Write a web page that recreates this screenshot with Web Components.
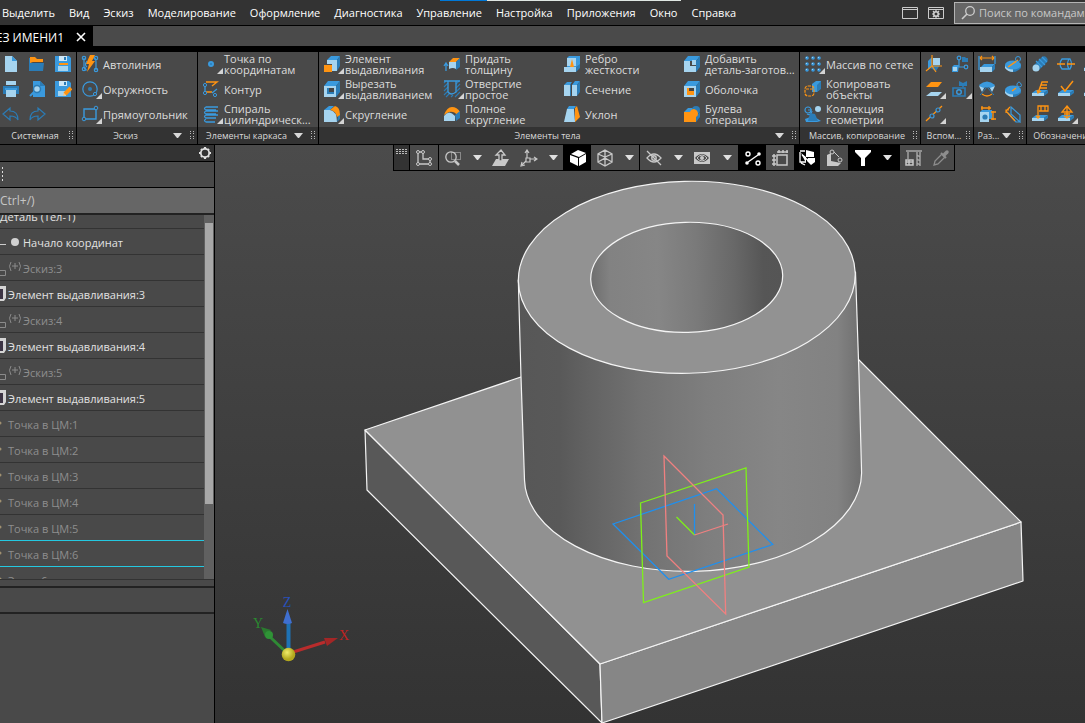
<!DOCTYPE html>
<html lang="ru">
<head>
<meta charset="utf-8">
<title>Деталь</title>
<style>
html, body { margin: 0; height: 100%; }
body { background: #333; overflow: hidden; }
</style>
</head>
<body>
<k-app></k-app>
<script>
const B = '#3a9ade', D = '#2b7cb6', L = '#a6d4ef', O = '#ff9412', G = '#c8c8c8';
const cubeBack = `<path fill="${B}" d="M1 6 5 1h12l-4 5z"/><path fill="${D}" d="M13 6l4-5v11l-4 5z"/>`;
const plate = `<path fill="${B}" d="M1 13l4-3h12l-4 3z"/><path fill="${L}" d="M1 13h12v3H1z"/><path fill="${D}" d="M13 13l4-3v3l-4 3z"/>`;
const eye = `<path fill="none" stroke="${G}" stroke-width="1.3" d="M2 9q7-8 14 0q-7 8-14 0z"/><circle cx="9" cy="9" r="2.2" fill="none" stroke="${G}" stroke-width="1.4"/>`;
const ICONS = {
  doc: `<path fill="${L}" d="M3 1h7l5 5v11H3z"/><path fill="${B}" d="M10 1l5 5h-5z"/>`,
  open: `<path fill="${D}" d="M1 3h2v13H1zM3 8h13l-1 8H2z"/><path fill="${O}" d="M2 2h5l2 2h6v3H5L2 8z"/>`,
  save: `<path fill="${B}" d="M1 1h14l2 2v14H1z"/><path fill="#cfe8f7" d="M5 1h8v5H5z"/><path fill="${D}" d="M10 2h2v3h-2z"/><path fill="${O}" d="M5 8h9v2H5z"/><path fill="${L}" d="M4 11h10v5H4z"/>`,
  print: `<path fill="${L}" d="M4 1h10v4H4z"/><path fill="${D}" d="M1 6h16v8H1z"/><path fill="${L}" d="M4 10h10v7H4z"/><path fill="${B}" d="M3 8h12v2H3z"/>`,
  preview: `<path fill="${B}" d="M5 1h7l5 5v11H5z"/><path fill="${D}" d="M12 1l5 5h-5z"/><circle cx="9" cy="9" r="3.5" fill="${L}" stroke="${D}" stroke-width="1.5"/><path stroke="${B}" stroke-width="2" d="M6 12l-4 4"/>`,
  saveas: `<path fill="${B}" d="M1 1h14l2 2v14H1z"/><path fill="#cfe8f7" d="M5 1h8v5H5z"/><path fill="${D}" d="M10 2h2v3h-2z"/><path fill="${L}" d="M4 11h8v5H4z"/><path fill="#ffc274" d="M9 16l1-4 2 3z"/><path stroke="${O}" stroke-width="4" d="M11 14l6-6"/>`,
  undo: `<path fill="none" stroke="${D}" stroke-width="1.2" d="M1 9l7-6v3q8 0 8 9q-2-4-8-4v4z"/>`,
  redo: `<path fill="none" stroke="${D}" stroke-width="1.2" d="M17 9l-7-6v3q-8 0-8 9q2-4 8-4v4z"/>`,
  auto: `<g fill="none" stroke="${B}" stroke-width="1.2"><path d="M3 3v8q0 4 3 4M12 3q3-1 3 4t0 8"/><circle cx="3" cy="3" r="1.7"/><circle cx="3" cy="14" r="1.7"/><circle cx="15" cy="3" r="1.7"/><circle cx="15" cy="15" r="1.7"/><path d="M6 6q-3 4 0 6"/></g><path fill="${O}" d="M9 0h5l-3 6h3l-8 11 2-8H5z"/>`,
  circle: `<circle cx="9" cy="9" r="7.2" fill="none" stroke="${B}" stroke-width="1.2"/><circle cx="9" cy="9" r="2" fill="${D}"/><circle cx="14" cy="14" r="1.6" fill="#494949" stroke="${B}"/>`,
  rect: `<path fill="none" stroke="${B}" stroke-width="1.4" d="M3 4h12v10H3z"/><g fill="#494949" stroke="${B}"><circle cx="15" cy="3" r="1.8"/><circle cx="3" cy="14" r="1.8"/></g>`,
  point: `<circle cx="9" cy="9" r="3" fill="${B}"/><circle cx="9" cy="9" r="1" fill="${D}"/>`,
  contour: `<path fill="none" stroke="${O}" stroke-width="1.4" d="M4 2h11l-5 4M4 12h6"/><path fill="none" stroke="${B}" stroke-width="1.3" d="M3 5v7M10 13l5-4"/><g fill="#494949" stroke="${B}"><circle cx="3" cy="5" r="1.6"/><circle cx="3" cy="13" r="1.6"/><circle cx="13" cy="15" r="1.6"/></g>`,
  spiral: `<g fill="none" stroke="${B}" stroke-width="1.3"><path d="M16 2H4q-3 1.500 0 3h10M16 6H4q-3 1.500 0 3h10M16 10H4q-3 1.500 0 3h10M4 14q-3 1.500 0 3h9"/></g>`,
  extrude: `<path fill="${B}" d="M4 5l4-4h9l-3 4z"/><path fill="${D}" d="M14 5l3-4v10l-3 5z"/><path fill="${L}" d="M4 5h10v11H9V9H4z"/><path fill="${O}" d="M1 10h8v7H1z"/>`,
  cut: `${cubeBack}<path fill="${L}" d="M1 6h12v11H1z"/><path fill="${D}" d="M4 8h7v6H4z"/><path fill="#444" d="M6 8h5v4H6z"/>`,
  fillet: `<path fill="${B}" d="M1 5l5-4h5L7 5z"/><path fill="${D}" d="M15 11l2-3v6l-3 3z"/><path fill="${O}" d="M7 5l5-4q5 1 5 9l-3 2q-1-6-7-7z"/><path fill="${L}" d="M1 5h6q7 1 7 12H1z"/>`,
  thick: `<path fill="none" stroke="${B}" stroke-width="1.3" d="M3 16V9M1 11l2-3 2 3"/><path fill="${O}" d="M6 7l4-4h7l-4 4z"/><path fill="${L}" d="M6 7h7v7q-3-2-7 0z"/><path fill="${D}" d="M13 7l4-4v9l-4 3z"/>`,
  hole: `<path fill="none" stroke="${D}" stroke-width="1.1" d="M1 3l2-2M1 7l4-4M1 11l4-4M1 15l4-4M3 17l3-3M8 17l2-2M12 17l5-5M13 12l4-4M13 8l4-4M13 4l3-3"/><path fill="none" stroke="${B}" stroke-width="1.3" d="M1 1h4v11q3 4 8 0V1h4M5 1h8"/>`,
  full: `<path fill="${O}" d="M1 10q3-8 8-8t8 5l-3 3q-3-4-8-3z"/><path fill="${L}" d="M1 16V11q5-7 11 0v5z"/><path fill="${D}" d="M12 10l5-4v7l-4 3z"/>`,
  rib: `<path fill="${B}" d="M4 3l2-2h11v10l-4 5V12H4z"/><path fill="${D}" d="M13 12l4-3v4l-4 4z"/><path fill="${L}" d="M4 3h9v8H4zM1 12h12v5H1z"/><path fill="${O}" d="M9 4l-2 8h4z"/>`,
  section: `<path fill="${B}" d="M1 5l3-3h5L7 5zM9 5l3-4h5l-3 4z"/><path fill="${L}" d="M1 5h6v11H1zM9 5h5v11H9z"/><path fill="${D}" d="M14 5l3-4v11l-3 4zM7 5l1-1v12H7z"/>`,
  draft: `<path fill="${B}" d="M4 4l2-3h7l-2 3z"/><path fill="${L}" d="M4 4h7l1 13H1z"/><path fill="${O}" d="M12 3l2-2 3 11-5 5z"/>`,
  add: `${cubeBack}<path fill="${L}" d="M1 6h6v5h6v6H1zM9 5h4v5H9z"/><path fill="${B}" d="M9 5l2-2h4l-2 2z"/>`,
  shell: `${cubeBack}<path fill="${L}" d="M1 6h12v11H1z"/><path fill="#444" d="M4 8h7v7H4z"/><path fill="${O}" d="M4 8h2v3h5v4H4z"/>`,
  bool: `<path fill="${B}" d="M1 7l4-4h5v4z"/><circle cx="13" cy="5" r="4" fill="${D}"/><path fill="${D}" d="M12 12l5-5v5l-4 5z"/><path fill="${O}" d="M1 7h6q1-3 4-3 4 1 4 5 0 2-2 3v5H1z"/>`,
  grid: `<g fill="${B}">${[2, 8, 14].map(y => [2, 8, 14].map(x => `<circle cx="${x + 1}" cy="${y + 1}" r="1.800"/><path fill="${L}" d="M${x} ${y}h1v1h-1z"/>`).join('')).join('')}</g>`,
  copy: `<path fill="${B}" d="M8 4l4-3h5v7l-4 4H8z"/><path fill="${D}" d="M13 5l4-4v8l-4 3z"/><g fill="none" stroke="${O}" stroke-width="1.2" stroke-dasharray="3 1"><rect x="1" y="6" width="9" height="10" rx="3"/><path d="M2 9h8"/></g>`,
  coll: `<g fill="none" stroke="${B}" stroke-width="1.2"><circle cx="4" cy="5" r="3"/><path d="M4 5h4M3 9q4 2 5-3"/></g><circle cx="14" cy="4" r="3" fill="${L}"/><path fill="${B}" d="M1 14l8-3 8 5-4 1H2z"/><path fill="${D}" d="M6 8l5 1 3 7H4z"/>`,
  plane: `<path fill="${D}" d="M3 12l5-2h7l-4 6z"/><path fill="${B}" d="M3 6l4-4v9l-4 4z"/><path fill="${L}" d="M8 3h7v7H8z"/><path fill="none" stroke="${O}" stroke-width="1.2" d="M7 0v11L1 16M7 11h10M7 11l4 6"/>`,
  tree: `<g fill="none" stroke="${B}" stroke-width="1.2"><circle cx="8" cy="3" r="1.800"/><circle cx="15" cy="12" r="1.800"/><path d="M8 5v7h5M7 12h-2"/></g><path fill="${D}" d="M11 2h3l1 1h2v4h-6z"/><path fill="${B}" d="M1 12l2-2h5l-1 7H1z"/><path fill="${L}" d="M2 12h4v4H2z"/>`,
  planes: `<path fill="${O}" d="M1 7l5-5h11l-4 5z"/><path fill="${L}" d="M1 16l5-4h11l-4 4z"/>`,
  camera: `<path fill="${D}" d="M8 1l4 2 4-2v5h-3l-1 2-1-2H8z"/><path fill="none" stroke="${D}" stroke-width="1.6" d="M2 8h12v8H2z"/><circle cx="8" cy="12" r="2.300" fill="none" stroke="${B}" stroke-width="1.400"/>`,
  axis: `<path stroke="${O}" stroke-width="1.3" d="M1 16L17 1"/><g fill="#494949" stroke="${B}" stroke-width="1.2"><circle cx="7" cy="11" r="2"/><circle cx="13" cy="5" r="2"/></g>`,
  dim: `<path fill="none" stroke="${O}" stroke-width="1.2" d="M2 3h14M4 1L2 3l2 2M14 1l2 2-2 2"/><path stroke="${B}" stroke-width="1.300" d="M1 1v14M17 1v8"/><path fill="${B}" d="M3 12l3-3h11l-3 3z"/><path fill="${L}" d="M2 12h12v5H2z"/><path fill="${D}" d="M14 12l3-3v5l-3 3z"/>`,
  disk: `<path fill="${D}" d="M1 10v3q8 8 16 0v-3z"/><path fill="${L}" d="M1 10v3q3 4 8 4v-3z"/><ellipse cx="9" cy="10" rx="8" ry="4.500" fill="${B}"/><path stroke="${O}" stroke-width="1.500" d="M4 12L14 5"/><circle cx="14" cy="4" r="2.500" fill="none" stroke="${B}"/>`,
  angle: `<path fill="${B}" d="M1 5q8-7 16 0l-3 5q-5-6-10 0z"/><path fill="${L}" d="M1 6l5 2-2 4zM17 6l-5 2 2 4z"/><path fill="none" stroke="${D}" d="M9 7l-7 8M9 7l7 8"/><path fill="none" stroke="${O}" stroke-width="1.300" d="M4 14q5 4 10 0"/>`,
  disk2: `<path fill="${D}" d="M1 10v3q8 8 16 0v-3z"/><path fill="${L}" d="M1 10v3q3 4 8 4v-3z"/><ellipse cx="9" cy="10" rx="8" ry="4.500" fill="${B}"/><path stroke="${O}" stroke-width="1.500" d="M8 11l4-3"/><path fill="none" stroke="${B}" d="M13 8V4q2-4 4 0t-4 2"/>`,
  size: `<path fill="${B}" d="M2 7l2-2h10v9H2z"/><path fill="${L}" d="M2 7h9v10H2z"/><circle cx="7" cy="12" r="2.600" fill="${D}"/><path stroke="${O}" stroke-width="1.300" d="M3 3h10M15 6v9M13 7h5M13 14h5M4 1v4M11 1v4"/>`,
  diag: `<path fill="none" stroke="${B}" stroke-width="1.200" d="M7 2l9 8v7l-9-8zM4 8l8 9h4"/><path fill="none" stroke="${O}" stroke-width="1.200" d="M6 2L2 6l9 10M2 8V5h3"/>`,
  bolt: `<path stroke="${D}" stroke-width="7" stroke-linecap="round" d="M6 12l7-7"/><path stroke="${B}" stroke-width="1.200" d="M5 6l6 6M8 4l6 6M11 2l5 5"/><circle cx="5" cy="13" r="3.500" fill="${L}"/>`,
  cyl: `<path fill="none" stroke="${B}" stroke-width="1.300" d="M5 4h8q3 5 0 10H5q-4-5 0-10zM12 4q-3 5 0 10"/><path stroke="${O}" stroke-width="1.300" d="M0 9h8M10 9h8"/>`,
  mark: `${plate}<path fill="none" stroke="${O}" stroke-width="1.400" d="M7 13l4-11h6M10 5h6M9 8h7M6 10l1 3 3-2"/>`,
  rough: `${plate}<path fill="none" stroke="${O}" stroke-width="1.500" d="M4 6l4 5 8-10"/>`,
  flag: `${plate}<path fill="none" stroke="${O}" stroke-width="1.300" d="M7 13V1h10v5H8M10 1v5M14 1v5M5 11l2 2 2-2"/>`,
  warn: `${plate}<path fill="none" stroke="${O}" stroke-width="1.300" d="M10 1l5 6H5zM10 3v9M7 9h6M7 11l3 2 3-2"/>`,
  win: `<path fill="none" stroke="#ccc" d="M1.500 3.500h15v11h-15zM1 5.500h16"/>`,
  wingear: `<path fill="none" stroke="#ccc" d="M1.500 3.500h15v11h-15zM1 5.500h16"/><circle cx="9" cy="10" r="2.300" fill="none" stroke="#ccc" stroke-width="1.600"/><path stroke="#ccc" stroke-width="1.200" d="M9 6v2M9 12v2M5 10h2M11 10h2M6 7l1 1M12 7l-1 1M6 13l1-1M12 13l-1-1"/>`,
  find: `<circle cx="11" cy="7" r="4.300" fill="none" stroke="#ccc" stroke-width="1.300"/><path stroke="#ccc" stroke-width="1.600" d="M8 10l-5 5"/>`,
  gear: `<circle cx="9" cy="8" r="4.200" fill="none" stroke="#e0e0e0" stroke-width="1.800"/><path stroke="#e0e0e0" stroke-width="2.200" d="M9 2v2M9 12v2M3 8h2M13 8h2M5 4l1 1M13 4l-1 1M5 12l1-1M13 12l-1-1"/>`,
  sketch: `<path fill="none" stroke="${G}" stroke-width="1.300" d="M3 3h5v7h7v5H3z"/><g fill="#494949" stroke="${G}"><circle cx="3" cy="3" r="1.500"/><circle cx="8" cy="3" r="1.500"/><circle cx="3" cy="15" r="1.500"/><circle cx="15" cy="15" r="1.500"/><circle cx="15" cy="10" r="1.500"/></g>`,
  zoom: `<circle cx="7" cy="8" r="5.200" fill="none" stroke="${G}" stroke-width="1.300"/><path stroke="${G}" stroke-width="2.500" d="M11 12l4 4"/><path fill="none" stroke="${G}" stroke-dasharray="1 1" d="M7.500 3.500h9v7h-9z"/>`,
  orient: `<path fill="${G}" d="M4 10h13l-4 7H0z"/><path fill="#494949" stroke="${G}" stroke-width="1.300" d="M7 12V6H4l5-5 4 5h-3v6z"/>`,
  axes: `<path fill="none" stroke="${G}" stroke-width="1.200" d="M7 9V2M10 10h6M6 12l-4 4M5 4l2-3 2 3M14 8l3 2-3 2M2 13l-1 4 4-1"/><path fill="#494949" stroke="${G}" stroke-width="1.200" d="M6 9h4v4H6z"/>`,
  cube: `<path fill="#fff" d="M9 1l8 3-7 4-8-3zM1 6l8 3v8l-8-4zM17 5v8l-7 4V9z"/>`,
  wire: `<path fill="none" stroke="${G}" stroke-width="1.300" d="M9 1l7 4v8l-7 4-7-4V5zM2 5l7 3 7-3M9 8v9M9 1v8l-7 4M9 9l7 4"/>`,
  noeye: `${eye}<path stroke="${G}" stroke-width="1.300" d="M2 2l14 14"/>`,
  eyebox: `<path fill="${G}" d="M1 3h16v12H1z"/><path fill="#494949" d="M2 9q7-8 14 0q-7 8-14 0z"/><path fill="none" stroke="${G}" d="M4 9q5-6 10 0q-5 6-10 0z"/><circle cx="9" cy="9" r="2" fill="${G}"/>`,
  snap: `<g fill="none" stroke="#fff" stroke-width="1.400"><circle cx="4" cy="5" r="2"/><circle cx="14" cy="14" r="2"/><path d="M4 13L14 6"/></g><g fill="#fff"><circle cx="3" cy="14" r="1.800"/><circle cx="15" cy="5" r="1.800"/></g>`,
  grow: `<path fill="none" stroke="${G}" stroke-width="1.500" d="M6 6h10v10H6zM3 5v12M1 7h4M1 11h4M1 15h4M6 3h11M8 1v3M12 1v3M16 1v3"/>`,
  view: `<path fill="none" stroke="#fff" stroke-width="1.300" d="M2 2h5M2 3v10h6M3 14l4 2M4 6l9 8"/><path fill="#fff" d="M8 1l8 2v5H8zM3 4l5 4v6zM10 9h7v4l-4 3-4-4z"/>`,
  angle3: `<path fill="${G}" d="M2 6l4-2v8l10 2-3 3H2z"/><g fill="none" stroke="${G}"><circle cx="7" cy="3" r="2"/><circle cx="15" cy="11" r="2"/><path d="M9 3l5 5"/></g>`,
  funnel: `<path fill="#fff" d="M1 1h16v2l-6 6v8H7V9L1 3z"/>`,
  crane: `<path fill="none" stroke="#a8a8a8" stroke-width="1.400" d="M1 2h16M3 3v7M12 3v14M15 3v14M12 6l3 2M12 10l3 2M12 14l3 2"/><path fill="none" stroke="#c8c8c8" stroke-width="1.500" d="M1 11h7v5H1zM4 11v5M1 13h7"/>`,
  pipette: `<path stroke="#8d8d8d" stroke-width="3.500" stroke-linecap="round" d="M12 6l3-3"/><path fill="none" stroke="#8d8d8d" stroke-width="1.300" d="M10 5l-7 7-1 4 4-1 7-7"/><path stroke="#8d8d8d" stroke-width="2" d="M9 4l5 5"/>`
};

function define(name, css, html, setup) {
  const t = document.createElement('template');
  t.innerHTML = `<style>${css}</style>${html}`;
  customElements.define(name, class extends HTMLElement {
    constructor() { super(); this.attachShadow({ mode: 'open' }).append(t.content.cloneNode(true)); }
    connectedCallback() { if (setup) setup(this, this.shadowRoot); }
  });
}
const reset = 'button{font:inherit;color:inherit;background:none;border:0;margin:0;padding:0;text-align:left;white-space:nowrap}';

customElements.define('k-icon', class extends HTMLElement {
  static observedAttributes = ['name'];
  constructor() {
    super();
    this.attachShadow({ mode: 'open' }).innerHTML = '<style>:host{display:block;width:18px;height:18px;flex:none}svg{display:block;width:18px;height:18px}</style><svg viewBox="0 0 18 18" aria-hidden="true"></svg>';
  }
  attributeChangedCallback(attr, old, value) {
    this.shadowRoot.querySelector('svg').innerHTML = ICONS[value] || '';
  }
});

define('k-cmd', `${reset}:host{display:block}
button{display:flex;align-items:center;gap:4px;height:24px;width:100%}
.i{position:relative}
.i svg{position:absolute;right:-3px;bottom:-1px;width:6px;height:6px;display:none}
:host([more]) svg{display:block}
:host([tool]) button{justify-content:center}
:host([tool]) .t{display:none}
.t{line-height:11px}`,
  `<button><span class="i"><k-icon></k-icon><svg viewBox="0 0 6 6"><path fill="#d4d4d4" d="M6 0v6H0z"/></svg></span><span class="t"><slot></slot></span></button>`,
  (el, r) => {
    r.querySelector('k-icon').setAttribute('name', el.getAttribute('icon'));
    if (el.hasAttribute('tool')) r.querySelector('button').setAttribute('aria-label', el.getAttribute('tool'));
  });

define('k-group', `:host{display:flex;flex-direction:column;flex:none;overflow:hidden;background:#494949}
.b{display:grid;grid-auto-flow:column;grid-template-rows:repeat(3,25px);grid-auto-columns:120px;padding-left:4px;height:75px}
:host([tools]) .b{grid-auto-flow:row;grid-template-columns:repeat(var(--n,2),26px);padding:0;justify-content:var(--align,start)}
footer{display:flex;align-items:center;height:17px;background:#333;font-size:9px;color:#d8d8d8;white-space:nowrap;padding:0 3px;gap:2px}
.c{flex:1;text-align:center;min-width:0}
svg{flex:none;display:block}.a{display:none;margin-right:6px}:host([menu]) .a{display:block}`,
  `<div class="b"><slot></slot></div><footer><span class="c"></span><svg class="a" width="9" height="5"><path fill="#d8d8d8" d="M0 0h9L5 5H4z"/></svg><svg width="4" height="9"><path fill="#bbb" d="M0 0h1v1H0zM3 0h1v1H3zM0 2h1v1H0zM3 2h1v1H3zM0 5h1v1H0zM3 5h1v1H3zM0 7h1v1H0zM3 7h1v1H3z"/></svg></footer>`,
  (el, r) => { r.querySelector('.c').textContent = el.getAttribute('caption'); });

define('k-ribbon', `:host{display:flex;gap:1px;background:#000;overflow:hidden;font-size:11px;color:#dcdcdc;border-bottom:1px solid #000}
.w1{width:120px}.w4{flex:1 0 480px}.s{width:52px}.sys{width:76px;--n:3;--align:end}.last{width:78px;--n:3}`, `
<k-group class="sys" tools caption="Системная">
<k-cmd tool="Создать" icon="doc"></k-cmd><k-cmd tool="Открыть" icon="open"></k-cmd><k-cmd tool="Сохранить" icon="save"></k-cmd>
<k-cmd tool="Печать" icon="print"></k-cmd><k-cmd tool="Просмотр" icon="preview"></k-cmd><k-cmd tool="Сохранить как" icon="saveas"></k-cmd>
<k-cmd tool="Отменить" icon="undo"></k-cmd><k-cmd tool="Повторить" icon="redo"></k-cmd></k-group>
<k-group class="w1" caption="Эскиз" menu><k-cmd icon="auto">Автолиния</k-cmd><k-cmd icon="circle" more>Окружность</k-cmd><k-cmd icon="rect" more>Прямоугольник</k-cmd></k-group>
<k-group class="w1" caption="Элементы каркаса" menu><k-cmd icon="point" more>Точка по<br>координатам</k-cmd><k-cmd icon="contour">Контур</k-cmd><k-cmd icon="spiral" more>Спираль<br>цилиндрическ...</k-cmd></k-group>
<k-group class="w4" caption="Элементы тела" menu>
<k-cmd icon="extrude" more>Элемент<br>выдавливания</k-cmd><k-cmd icon="cut" more>Вырезать<br>выдавливанием</k-cmd><k-cmd icon="fillet" more>Скругление</k-cmd>
<k-cmd icon="thick">Придать<br>толщину</k-cmd><k-cmd icon="hole" more>Отверстие<br>простое</k-cmd><k-cmd icon="full">Полное<br>скругление</k-cmd>
<k-cmd icon="rib">Ребро<br>жесткости</k-cmd><k-cmd icon="section">Сечение</k-cmd><k-cmd icon="draft">Уклон</k-cmd>
<k-cmd icon="add">Добавить<br>деталь-заготов...</k-cmd><k-cmd icon="shell">Оболочка</k-cmd><k-cmd icon="bool">Булева<br>операция</k-cmd></k-group>
<k-group class="w1" caption="Массив, копирование"><k-cmd icon="grid" more>Массив по сетке</k-cmd><k-cmd icon="copy">Копировать<br>объекты</k-cmd><k-cmd icon="coll">Коллекция<br>геометрии</k-cmd></k-group>
<k-group class="s" tools caption="Вспом..."><k-cmd tool="Система координат" icon="plane"></k-cmd><k-cmd tool="Структура" icon="tree"></k-cmd><k-cmd tool="Плоскость" icon="planes" more></k-cmd><k-cmd tool="Вид" icon="camera" more></k-cmd><k-cmd tool="Ось" icon="axis" more></k-cmd></k-group>
<k-group class="s" tools caption="Раз..." menu><k-cmd tool="Линейный размер" icon="dim"></k-cmd><k-cmd tool="Диаметр" icon="disk"></k-cmd><k-cmd tool="Угловой размер" icon="angle"></k-cmd><k-cmd tool="Радиус" icon="disk2"></k-cmd><k-cmd tool="Авторазмер" icon="size"></k-cmd><k-cmd tool="Размер" icon="diag"></k-cmd></k-group>
<k-group class="last" tools caption="Обозначения"><k-cmd tool="Резьба" icon="bolt"></k-cmd><k-cmd tool="Осевая" icon="cyl"></k-cmd><k-cmd tool="Плоскость" icon="rough"></k-cmd><k-cmd tool="Выноска" icon="mark"></k-cmd><k-cmd tool="Шероховатость" icon="rough"></k-cmd><k-cmd tool="Отметка" icon="mark"></k-cmd><k-cmd tool="База" icon="flag"></k-cmd><k-cmd tool="Допуск" icon="warn" more></k-cmd></k-group>`);

define('k-menubar', `${reset}:host{display:flex;align-items:center;height:25px;background:#333;border-bottom:1px solid #000;font-size:11px;color:#fff;overflow:hidden;position:relative}
nav{display:flex;gap:14px;padding-left:2px;flex:1}
.bar{position:absolute;top:0;left:440px;width:241px;height:1px;background:linear-gradient(90deg,#0078d7 47px,#dfe6e2 47px)}
.r{display:flex;gap:8px;align-items:center;width:184px;flex:none}
label{display:flex;flex:none;align-items:center;box-sizing:border-box;width:180px;height:22px;border:1px solid #b4b4b4;background:#666;padding-left:4px;gap:2px;margin-left:1px}
input{flex:1;min-width:0;border:0;background:none;padding:0;font:inherit;color:#eee;outline:0}input::placeholder{color:#c8c8c8;opacity:1}`,
  `<div class="bar"></div><nav>${['Выделить', 'Вид', 'Эскиз', 'Моделирование', 'Оформление', 'Диагностика', 'Управление', 'Настройка', 'Приложения', 'Окно', 'Справка'].map(s => `<button>${s}</button>`).join('')}</nav>
<div class="r"><button aria-label="Окно"><k-icon name="win"></k-icon></button><button aria-label="Настройка окна"><k-icon name="wingear"></k-icon></button><label><k-icon name="find"></k-icon><input type="text" aria-label="Поиск" placeholder="Поиск по командам"></label></div>`);

define('k-tabs', `${reset}:host{display:flex;height:20px;background:#4a4a4a;border-bottom:6px solid #000;font-size:12px;color:#fff}
.tab{display:flex;justify-content:flex-end;align-items:center;gap:12px;width:93px;height:22px;padding-right:7px;box-sizing:border-box;background:#000;overflow:hidden;white-space:nowrap}
svg{display:block}`,
  `<div class="tab"><span>БЕЗ ИМЕНИ1</span><button aria-label="Закрыть"><svg width="10" height="10"><path stroke="#fff" stroke-width="1.600" d="M1 1l8 8M9 1L1 9"/></svg></button></div>`);

define('k-row', `:host{display:flex;align-items:center;height:25px;border-bottom:1px solid #333;color:#e2e2e2;font-size:11px;line-height:17px;white-space:nowrap}
:host([dim]){color:#8e8e8e}:host([mark]){border-color:#24c8e0}
svg{flex:none;display:block}span{padding-top:2px}`, `<svg height="25"></svg><span><slot></slot></span>`,
  (el, r) => {
    const s = r.querySelector('svg');
    const [w, m] = {
      root: [0, ''],
      origin: [23, '<path stroke="#ccc" d="M0 15.500h6"/><circle cx="15" cy="13" r="4" fill="#d0d0d0"/>'],
      sketch: [23, '<path fill="none" stroke="#8b8b8b" d="M0 15.500h5.500v5H0M11 7q-3 4 0 9M19 7q3 4 0 9M15 8v6M12 11h6"/>'],
      solid: [8, '<path fill="#d4d4d4" d="M0 5h6v12l-2 3H0z"/><path fill="#3c3444" d="M0 8h3v10H0z"/>'],
      point: [8, '<circle cx="0" cy="12" r="1.500" fill="#a09070"/>']
    }[el.getAttribute('kind')];
    s.setAttribute('width', w); s.innerHTML = m;
  });

define('k-side', `${reset}:host{display:flex;flex-direction:column;width:214px;flex:none;background:#494949;border-right:1px solid #000}
.h{display:flex;justify-content:flex-end;height:16px;background:#333;border-bottom:1px solid #000;overflow:hidden}
.t{height:25px;border-bottom:1px solid #000}
.t svg{display:block}
.q{height:25px;background:#666;border-bottom:2px solid #222}
input{box-sizing:border-box;display:block;height:25px;border:0;background:none;padding:0;margin:0;outline:0;width:100%;font:inherit;font-size:12px;color:#eee}
input::placeholder{color:#c6c6c6;opacity:1}
.tree{display:grid;grid-template-columns:1fr 10px;height:364px;border-bottom:1px solid #333}
.rows{overflow:hidden;height:364px}
.sb{background:#606060;padding:8px 1px 75px}
.sb i{display:block;height:100%;background:#a8a8a8}
.g{height:6px;border-bottom:2px solid #222}
.p{height:24px;border-bottom:2px solid #222}`, `
<div class="h"><button aria-label="Настройки"><k-icon name="gear"></k-icon></button></div>
<div class="t"><svg width="4" height="24"><path stroke="#ddd" stroke-dasharray="2 2" d="M2.500 5v14"/></svg></div>
<div class="q"><input type="text" aria-label="Поиск" placeholder="Ctrl+/)"></div>
<div class="tree"><div class="rows">
<k-row kind="root">Деталь (Тел-1)</k-row><k-row kind="origin">Начало координат</k-row>
<k-row kind="sketch" dim>Эскиз:3</k-row><k-row kind="solid">Элемент выдавливания:3</k-row>
<k-row kind="sketch" dim>Эскиз:4</k-row><k-row kind="solid">Элемент выдавливания:4</k-row>
<k-row kind="sketch" dim>Эскиз:5</k-row><k-row kind="solid">Элемент выдавливания:5</k-row>
<k-row kind="point" dim>Точка в ЦМ:1</k-row><k-row kind="point" dim>Точка в ЦМ:2</k-row><k-row kind="point" dim>Точка в ЦМ:3</k-row><k-row kind="point" dim>Точка в ЦМ:4</k-row>
<k-row kind="point" dim mark>Точка в ЦМ:5</k-row><k-row kind="point" dim mark>Точка в ЦМ:6</k-row><k-row kind="point" dim>Эскиз:6</k-row>
</div><div class="sb"><i></i></div></div><div class="g"></div><div class="p"></div>`,
  (el, r) => { r.querySelector('.rows').scrollTop = 12; });

define('k-tool', `${reset}:host{display:block;width:28px}:host([n]){width:26px}:host([drop]){width:20px}:host([on]){background:#000}:host(.wide){width:22px}
button{display:flex;align-items:center;justify-content:center;width:100%;height:25px}svg{display:none}:host([drop]) svg{display:block}:host([drop]) k-icon{display:none}`,
  `<button><k-icon></k-icon><svg width="9" height="5"><path fill="#e0e0e0" d="M0 0h9L5 5H4z"/></svg></button>`,
  (el, r) => { r.querySelector('k-icon').setAttribute('name', el.getAttribute('icon') || ''); r.querySelector('button').setAttribute('aria-label', el.getAttribute('label') || 'Ещё'); });

define('k-viewbar', `:host{display:flex;background:#000;border:solid #000;border-width:0 1px 1px;gap:1px}
section{display:flex;background:#4a4a4a}
.h{width:15px;background:#333}.h svg{display:block;margin:4px 2px}.gap{margin-left:1px}`, `
<div class="h"><svg width="12" height="6"><path fill="#bbb" d="M0 0h2v1H0zM3 0h2v1H3zM6 0h2v1H6zM9 0h2v1H9zM0 2h2v1H0zM3 2h2v1H3zM6 2h2v1H6zM9 2h2v1H9zM0 4h2v1H0zM3 4h2v1H3zM6 4h2v1H6zM9 4h2v1H9z"/></svg></div>
<section><k-tool icon="sketch" label="Эскиз"></k-tool></section>
<section><k-tool icon="zoom" label="Масштаб"></k-tool><k-tool drop></k-tool><k-tool icon="orient" label="Ориентация"></k-tool><k-tool icon="axes" label="Оси"></k-tool><k-tool drop></k-tool></section>
<section class="gap"><k-tool icon="cube" n on label="Полутоновое"></k-tool><k-tool icon="wire" label="Каркас"></k-tool><k-tool drop></k-tool></section>
<section><k-tool icon="noeye" label="Скрыть"></k-tool><k-tool drop></k-tool><k-tool icon="eyebox" label="Показать"></k-tool><k-tool drop class="wide"></k-tool></section>
<section class="gap"><k-tool icon="snap" n on label="Привязки"></k-tool><k-tool icon="grow" label="Сетка"></k-tool><k-tool icon="view" n on label="Перестроение"></k-tool><k-tool icon="angle3" label="Угол"></k-tool></section>
<section class="gap"><k-tool icon="funnel" n on label="Фильтр"></k-tool><k-tool drop on class="wide"></k-tool></section>
<section class="gap"><k-tool icon="crane" label="Механизм"></k-tool><k-tool icon="pipette" n label="Пипетка"></k-tool></section>`);

define('k-view', `:host{display:block;position:relative;flex:1;min-width:0;overflow:hidden;background:linear-gradient(#4b4b4b,#333)}
.s{display:block;width:100%;height:100%}
k-viewbar{position:absolute;top:0;left:178px}`, `
<svg class="s" viewBox="215 145 870 578" preserveAspectRatio="xMinYMin meet" role="img" aria-label="Модель детали">
<defs>
<linearGradient id="side"><stop offset="0" stop-color="#575757"/><stop offset=".12" stop-color="#595959"/><stop offset=".2" stop-color="#626262"/><stop offset=".36" stop-color="#727272"/><stop offset=".55" stop-color="#7e7e7e"/><stop offset=".76" stop-color="#868686"/><stop offset=".93" stop-color="#828282"/><stop offset="1" stop-color="#6e6e6e"/></linearGradient>
<linearGradient id="bore"><stop offset="0" stop-color="#6e6e6e"/><stop offset=".1" stop-color="#828282"/><stop offset=".35" stop-color="#868686"/><stop offset=".55" stop-color="#7a7a7a"/><stop offset=".75" stop-color="#686868"/><stop offset=".9" stop-color="#565656"/><stop offset="1" stop-color="#555"/></linearGradient>
<radialGradient id="ball" cx=".4" cy=".35"><stop offset="0" stop-color="#efeb6a"/><stop offset="1" stop-color="#b3a81e"/></radialGradient>
</defs>
<g stroke="#f4f4f4" stroke-width="1.200" stroke-linejoin="round">
<path fill="#585858" d="M365 430L600 664L602 723L367 490z"/>
<path fill="#868686" d="M600 664L1021 522L1023 581L602 723z"/>
<path fill="#919191" d="M365 430L786 287L1021 522L600 664z"/>
<path fill="url(#side)" d="M518.300 280L521 377L524.500 480A168.600 96 -1.400 0 0 861.600 473L859 375L855.500 272z"/>
<ellipse cx="686.800" cy="277.300" rx="168.500" ry="96" fill="#929292" transform="rotate(-1.430 686.800 277.300)"/>
<ellipse cx="686.700" cy="277.300" rx="96" ry="55" fill="url(#bore)" transform="rotate(-1.430 686.700 277.300)"/>
</g>
<g fill="none" stroke-width="1.300">
<g stroke="#1e90f0"><path d="M613 524L716.700 488.700L772.700 544.500L668.700 579.300z"/><path d="M694.500 535V504"/></g>
<g stroke="#7ef01a"><path d="M640.500 503L746 468L749 567L643.500 602.500z"/><path d="M694.500 535L676.500 517"/></g>
<g stroke="#f08080"><path d="M664 456L723 515L725.700 614L667 556z"/><path d="M694.500 535L728 524"/></g>
</g>
<g>
<path stroke="#2f8a35" stroke-width="3" d="M288 654L268 635"/><path fill="#2a7a2f" d="M261 627l10 3-6 7z"/><circle cx="269" cy="635" r="4" fill="#2f9336"/>
<path stroke="#b92c2c" stroke-width="3" d="M290 653L325 642"/><path fill="#a32626" d="M338 638l-14 0 3 8z"/>
<path stroke="#1e72b4" stroke-width="4" d="M288.500 650V622"/><path fill="#3f6fd0" d="M287.500 609l4.500 14q-4.500 2-9 0z"/>
<circle cx="288.500" cy="654.500" r="6.800" fill="url(#ball)"/>
<g font-family="Liberation Serif,serif" font-size="14" text-anchor="middle"><text x="287" y="607" fill="#2850b8">Z</text><text x="258" y="628" fill="#2a8a30">Y</text><text x="344" y="640" fill="#c02222">X</text></g>
</g>
</svg><k-viewbar></k-viewbar>`);

define('k-app', `:host{display:flex;flex-direction:column;height:100vh;font-family:"Open Sans","Noto Sans",sans-serif;background:#333}
main{display:flex;flex:1;min-height:0}`,
  `<k-menubar></k-menubar><k-tabs></k-tabs><k-ribbon></k-ribbon><main><k-side></k-side><k-view></k-view></main>`);
</script>
</body>
</html>
